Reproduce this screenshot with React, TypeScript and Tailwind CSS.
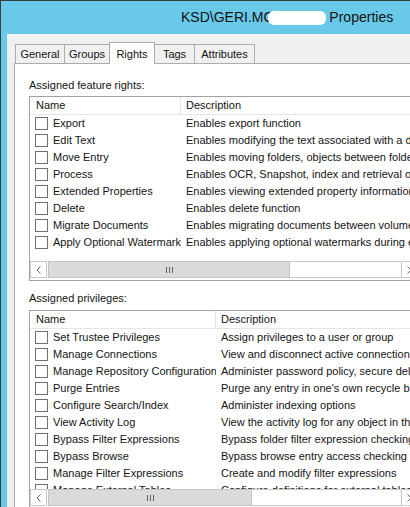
import React from 'react';

type Row = { name: string; desc: string };

const featureRights: Row[] = [
  { name: 'Export', desc: 'Enables export function' },
  { name: 'Edit Text', desc: 'Enables modifying the text associated with a document' },
  { name: 'Move Entry', desc: 'Enables moving folders, objects between folders' },
  { name: 'Process', desc: 'Enables OCR, Snapshot, index and retrieval of content' },
  { name: 'Extended Properties', desc: 'Enables viewing extended property information' },
  { name: 'Delete', desc: 'Enables delete function' },
  { name: 'Migrate Documents', desc: 'Enables migrating documents between volumes' },
  { name: 'Apply Optional Watermark', desc: 'Enables applying optional watermarks during export' },
];

const privileges: Row[] = [
  { name: 'Set Trustee Privileges', desc: 'Assign privileges to a user or group' },
  { name: 'Manage Connections', desc: 'View and disconnect active connections' },
  { name: 'Manage Repository Configuration', desc: 'Administer password policy, secure delete' },
  { name: 'Purge Entries', desc: "Purge any entry in one's own recycle bin" },
  { name: 'Configure Search/Index', desc: 'Administer indexing options' },
  { name: 'View Activity Log', desc: 'View the activity log for any object in the repository' },
  { name: 'Bypass Filter Expressions', desc: 'Bypass folder filter expression checking' },
  { name: 'Bypass Browse', desc: 'Bypass browse entry access checking when browsing' },
  { name: 'Manage Filter Expressions', desc: 'Create and modify filter expressions' },
  { name: 'Manage External Tables', desc: 'Configure definitions for external tables' },
];

const tabs = [
  { label: 'General', w: 'w-[50px]' },
  { label: 'Groups', w: 'w-[46px]' },
  { label: 'Rights', w: 'w-[46px]', active: true },
  { label: 'Tags', w: 'w-[41px]' },
  { label: 'Attributes', w: 'w-[61px]' },
];

const Chevron: React.FC<{ dir: 'left' | 'right' }> = ({ dir }) => (
  <svg width="5" height="8" viewBox="0 0 5 8" fill="none">
    <path
      d={dir === 'left' ? 'M4.5 0.5 L1 4 L4.5 7.5' : 'M0.5 0.5 L4 4 L0.5 7.5'}
      stroke="#6a6a6a"
      strokeWidth="1"
    />
  </svg>
);

const HScrollbar: React.FC<{ thumb: string }> = ({ thumb }) => (
  <div className="flex h-[17px] shrink-0 mb-[2px] bg-white">
    <div className="w-[17px] h-full flex items-center justify-center border border-[#c9c9c9] bg-white">
      <Chevron dir="left" />
    </div>
    <div className={`${thumb} h-full ml-px bg-[#dadada] border border-[#c4c4c4] flex items-center justify-center gap-[2px]`}>
      <span className="w-px h-[6px] bg-[#606060]" />
      <span className="w-px h-[6px] bg-[#606060]" />
      <span className="w-px h-[6px] bg-[#606060]" />
    </div>
    <div className="flex-1 h-full border-y border-[#c9c9c9] bg-white" />
    <div className="w-[17px] h-full flex items-center justify-center border border-[#c9c9c9] bg-white">
      <Chevron dir="right" />
    </div>
  </div>
);

const ListView: React.FC<{
  rows: Row[];
  nameW: string;
  height: string;
  thumb: string;
}> = ({ rows, nameW, height, thumb }) => (
  <div className={`w-[390px] ${height} border border-[#a3a3a3] bg-white flex flex-col overflow-hidden`}>
    <div className="h-[18px] shrink-0 flex border-b border-[#e5e5e5]">
      <div className={`${nameW} shrink-0 pl-[6px] border-r border-[#e5e5e5] flex items-center`}>Name</div>
      <div className="pl-[5px] flex items-center">Description</div>
    </div>
    <div className="flex-1 min-h-0 overflow-hidden">
      {rows.map((r) => (
        <div key={r.name} className="h-[17px] flex items-center whitespace-nowrap">
          <div className={`${nameW} shrink-0 pl-[5px] flex items-center gap-[5px] overflow-hidden`}>
            <span className="w-[13px] h-[13px] shrink-0 border border-[#707070] bg-white" />
            <span>{r.name}</span>
          </div>
          <div className="pl-[5px]">{r.desc}</div>
        </div>
      ))}
    </div>
    <HScrollbar thumb={thumb} />
  </div>
);

export default function App() {
  return (
    <div
      className="w-[410px] h-[507px] overflow-hidden bg-[#69c9e9] border-t border-l border-[#3c3c3c] text-[11px] text-[#141414]"
      style={{ fontFamily: '"Liberation Sans", Arial, sans-serif' }}
    >
      {/* title bar */}
      <div className="h-[33px] flex items-center pl-[180px] text-[14px] text-[#111] whitespace-nowrap">
        <span>KSD\GERI.MO</span>
        <span className="inline-block w-[58px] h-[14px] bg-white rounded-[6px] -ml-[6px] relative" />
        <span className="ml-[3px]">Properties</span>
      </div>

      {/* client area */}
      <div className="ml-[6px] w-[420px] h-[480px] bg-[#f0f0f0] pl-[7px] pt-[8px]">
        <div className="flex items-end h-[21px] ml-px">
          {tabs.map((t) =>
            t.active ? (
              <div
                key={t.label}
                className={`${t.w} h-[22px] -ml-px -mb-px relative z-10 bg-white border border-b-0 border-[#acacac] flex items-start justify-center pt-[3px]`}
              >
                {t.label}
              </div>
            ) : (
              <div
                key={t.label}
                className={`${t.w} h-[19px] -ml-px first:ml-0 bg-[#f0f0f0] border border-b-0 border-[#acacac] flex items-center justify-center`}
              >
                {t.label}
              </div>
            )
          )}
        </div>

        {/* tab page */}
        <div className="h-[460px] bg-white border border-[#acacac] pl-[14px] pt-[14px]">
          <div className="h-[15px] leading-[15px] mb-[3px]">Assigned feature rights:</div>
          <ListView rows={featureRights} nameW="w-[151px]" height="h-[185px]" thumb="w-[242px]" />
          <div className="h-[15px] leading-[15px] mt-[10px] mb-[4px]">Assigned privileges:</div>
          <ListView rows={privileges} nameW="w-[186px]" height="h-[199px]" thumb="w-[204px]" />
        </div>
      </div>
    </div>
  );
}
